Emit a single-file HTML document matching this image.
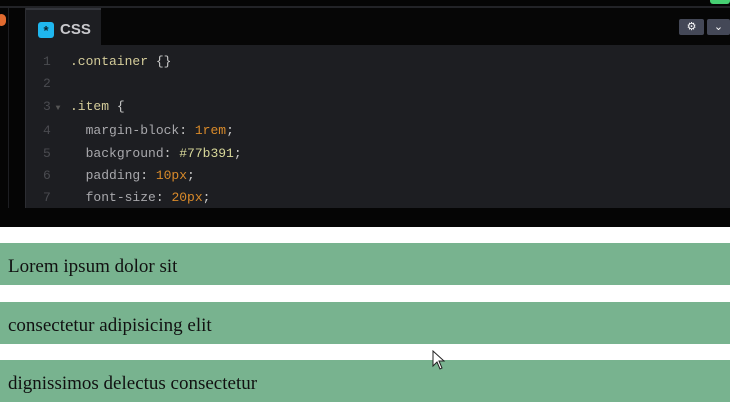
<!DOCTYPE html>
<html><head><meta charset="utf-8"><style>
*{margin:0;padding:0;box-sizing:border-box}
body{width:730px;height:419px;overflow:hidden;background:#fff;position:relative;font-family:"Liberation Sans",sans-serif}
.top{position:absolute;left:0;top:0;width:730px;height:227px;background:#050505}
.topline{position:absolute;left:0;top:6px;width:730px;height:2px;background:#222327}
.green0{position:absolute;left:710px;top:0;width:20px;height:4px;background:#47cf73;border-radius:0 0 3px 3px}
.strip{position:absolute;left:8px;top:8px;width:1px;height:200px;background:#1d1e22}
.badge{position:absolute;left:-3px;top:14px;width:9px;height:12px;background:#e06a2f;border-radius:5px}
.col{position:absolute;left:25px;top:8px;width:1px;height:200px;background:#2c2d32}
.editor{position:absolute;left:26px;top:8px;width:704px;height:200px;background:#1d1e22}
.head{position:absolute;left:0;top:0;width:704px;height:37px;background:#060606}
.tab{position:absolute;left:0;top:0;width:75px;height:37px;background:#1d1e22;border-top:2px solid #34363c}
.icon{position:absolute;left:12px;top:12px;width:16px;height:16px;background:#1fb7ef;border-radius:3px;color:#0a2430;font-size:13px;line-height:17px;text-align:center;font-weight:bold}
.tabt{position:absolute;left:34px;top:11px;color:#c8c8cc;font-size:15px;font-weight:bold}
.btn{position:absolute;top:11px;height:16px;background:#444857;border-radius:2px;color:#fff;font-size:11px;line-height:16px;text-align:center}
.code{position:absolute;left:0;font-family:"Liberation Mono",monospace;font-size:13px;line-height:22.4px;color:#c9c9c9;white-space:pre}
.ln{display:inline-block;width:44px;padding-left:17px;color:#4a4b50}
.sel{color:#d4cc9a}.num{color:#d98a2a}.hex{color:#d8d89a}.prop{color:#a8a8ac}
.bar{position:absolute;left:0;width:730px;height:42px;background:#78b38f;font-family:"Liberation Serif",serif;font-size:19px;color:#111;padding-left:8px;line-height:47px}
</style></head><body>
<div class="top"></div>
<div class="topline"></div>
<div class="green0"></div>
<div class="badge"></div>
<div class="strip"></div>
<div class="col"></div>
<div class="editor">
 <div class="head"><div class="tab"><div class="icon">*</div><div class="tabt">CSS</div></div>
  <div class="btn" style="left:653px;width:25px">⚙</div>
  <div class="btn" style="left:681px;width:23px">⌄</div>
 </div>
 <div class="code" style="top:43px"><div><span class="ln">1</span><span class="sel">.container</span> {}</div><div><span class="ln">2</span></div><div><span class="ln">3<span style="font-size:8px;color:#555"> ▼</span></span><span class="sel">.item</span> {</div><div><span class="ln">4</span>  <span class="prop">margin-block</span>: <span class="num">1rem</span>;</div><div><span class="ln">5</span>  <span class="prop">background</span>: <span class="hex">#77b391</span>;</div><div><span class="ln">6</span>  <span class="prop">padding</span>: <span class="num">10px</span>;</div><div><span class="ln">7</span>  <span class="prop">font-size</span>: <span class="num">20px</span>;</div></div>
</div>
<div class="bar" style="top:243px">Lorem ipsum dolor sit</div>
<div class="bar" style="top:302px">consectetur adipisicing elit</div>
<div class="bar" style="top:360px">dignissimos delectus consectetur</div>
<svg style="position:absolute;left:432px;top:350px" width="14" height="22" viewBox="0 0 14 22"><path d="M1 1 L1 16 L5 12 L8 19 L10 18 L7 11 L12 11 Z" fill="#fff" stroke="#222" stroke-width="1"/></svg>
</body></html>
